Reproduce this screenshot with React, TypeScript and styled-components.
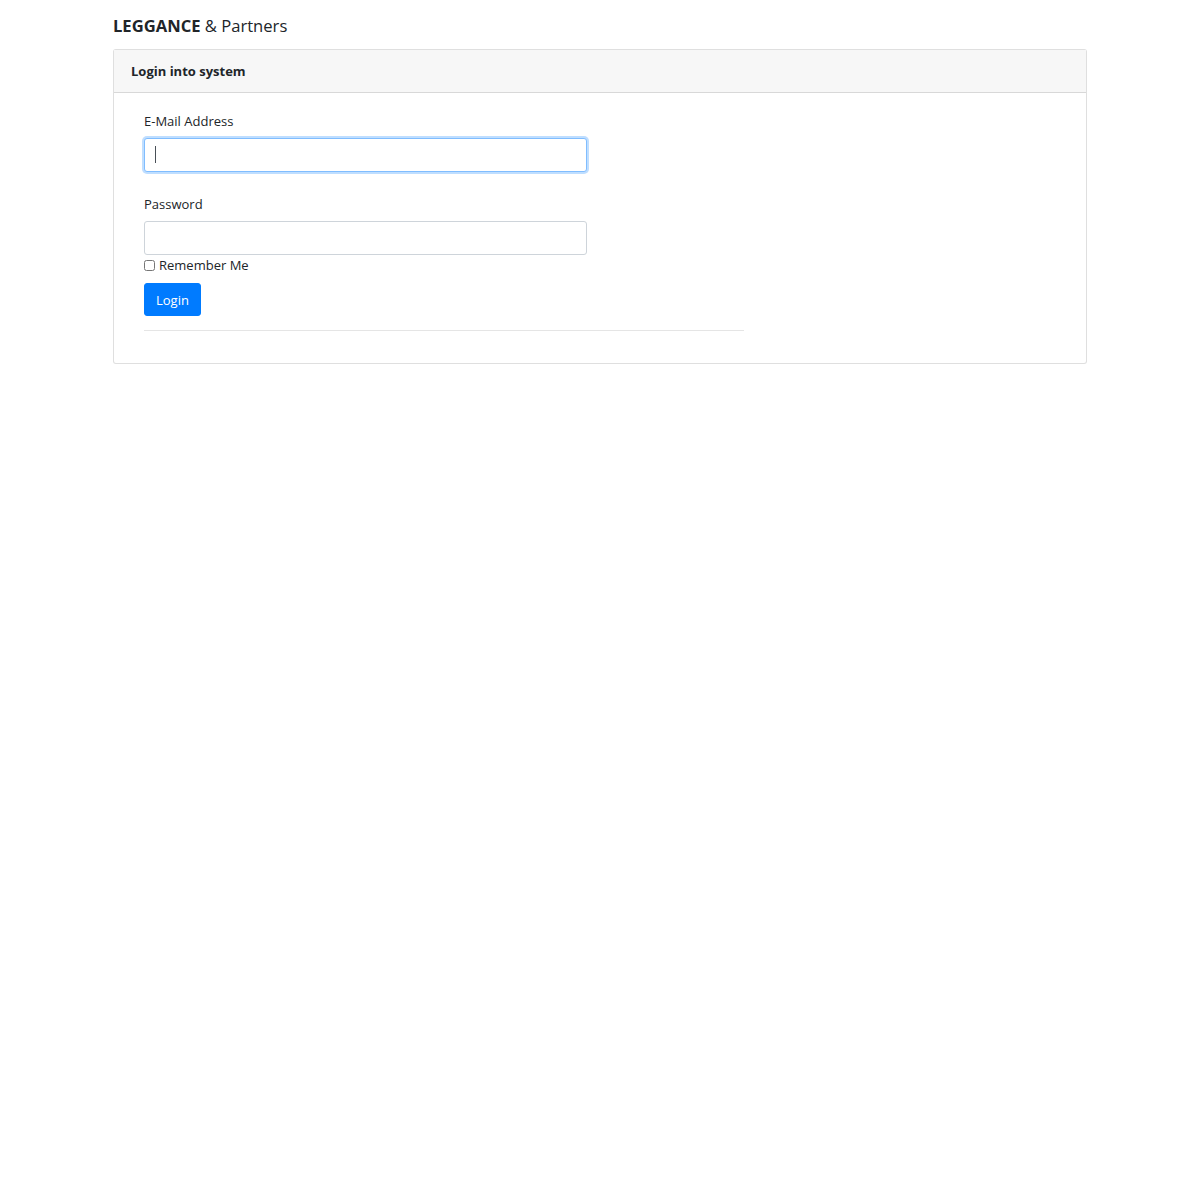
import React from 'react';
import styled, { createGlobalStyle } from 'styled-components';

const GlobalStyle = createGlobalStyle`
  body {
    margin: 0;
    background: #fff;
    font-family: "Open Sans", "Noto Sans", sans-serif;
    font-size: 13px;
    color: #212529;
  }
`;

const Page = styled.div`
  width: 974px;
  margin: 0 auto;
  padding-top: 15px;
`;

const Brand = styled.div`
  font-size: 16.6px;
  line-height: 22px;
  margin-bottom: 12px;
  color: #212529;
  b {
    font-weight: 700;
  }
`;

const Card = styled.div`
  border: 1px solid rgba(0, 0, 0, 0.125);
  border-radius: 3px;
  background: #fff;
`;

const CardHeader = styled.div`
  background: #f7f7f7;
  border-bottom: 1px solid rgba(0, 0, 0, 0.125);
  padding: 12px 17px;
  height: 43px;
  box-sizing: border-box;
  font-weight: 700;
  line-height: 18px;
`;

const CardBody = styled.div`
  padding: 19px 30px 32px;
`;

const FormGroup = styled.div<{ tight?: boolean }>`
  margin-bottom: ${({ tight }) => (tight ? '1px' : '23px')};
`;

const Label = styled.label`
  display: block;
  line-height: 18px;
  margin-bottom: 8px;
`;

const Input = styled.input<{ focused?: boolean }>`
  display: block;
  box-sizing: border-box;
  width: 443px;
  height: 34px;
  padding: 6px 10px;
  font-family: inherit;
  font-size: 13px;
  border-radius: 3px;
  outline: none;
  border: 1px solid ${({ focused }) => (focused ? '#80bdff' : '#ced4da')};
  box-shadow: ${({ focused }) => (focused ? '0 0 0 2px rgba(0, 123, 255, 0.25)' : 'none')};
`;

const Caret = styled.span`
  position: absolute;
  left: 11px;
  top: 8px;
  width: 1px;
  height: 17px;
  background: #495057;
`;

const InputWrap = styled.div`
  position: relative;
  width: 443px;
`;

const CheckRow = styled.label`
  display: flex;
  align-items: center;
  gap: 4px;
  line-height: 18px;
  margin-bottom: 9px;
  input {
    margin: 0;
    width: 11px;
    height: 11px;
  }
`;

const Button = styled.button`
  font-family: inherit;
  font-size: 13px;
  color: #fff;
  background: #007bff;
  border: 1px solid #007bff;
  border-radius: 3px;
  height: 33px;
  padding: 0 11px;
  display: block;
`;

const Divider = styled.hr`
  width: 600px;
  margin: 14px 0 0;
  border: 0;
  border-top: 1px solid rgba(0, 0, 0, 0.1);
`;

export default function App() {
  return (
    <>
      <GlobalStyle />
      <Page>
        <Brand>
          <b>LEGGANCE</b> &amp; Partners
        </Brand>
        <Card>
          <CardHeader>Login into system</CardHeader>
          <CardBody>
            <FormGroup>
              <Label>E-Mail Address</Label>
              <InputWrap>
                <Input type="email" focused />
                <Caret />
              </InputWrap>
            </FormGroup>
            <FormGroup tight>
              <Label>Password</Label>
              <Input type="password" />
            </FormGroup>
            <CheckRow>
              <input type="checkbox" />
              Remember Me
            </CheckRow>
            <Button>Login</Button>
            <Divider />
          </CardBody>
        </Card>
      </Page>
    </>
  );
}
